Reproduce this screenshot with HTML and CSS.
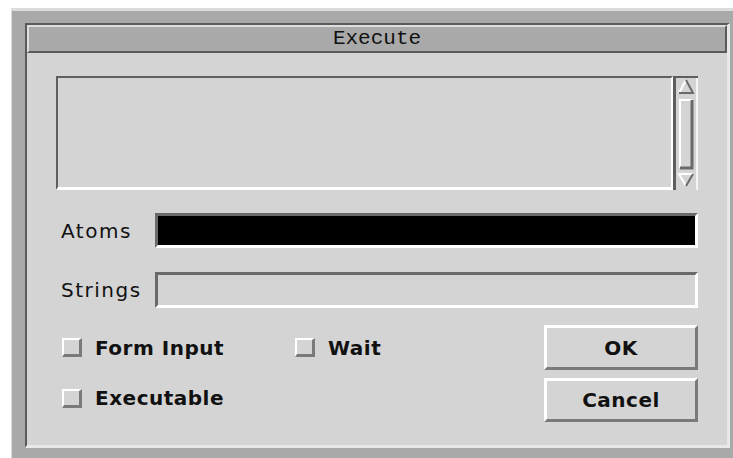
FILE: index.html
```html
<!DOCTYPE html>
<html>
<head>
<meta charset="utf-8">
<title>Execute</title>
<link rel="stylesheet" href="styles.css">
</head>
<body>
<div class="window">
  <div class="panel">
    <div class="titlebar">Execute</div>
    <div class="content">
      <div class="listrow">
        <div class="listbox"></div>
        <svg class="scrollbar" width="25" height="114" viewBox="0 0 25 114">
          <!-- sunken frame edges -->
          <rect x="0" y="0" width="25" height="2" fill="#5e5e5e"/>
          <rect x="0" y="0" width="3" height="114" fill="#5e5e5e"/>
          <rect x="23" y="2" width="2" height="112" fill="#f4f4f4"/>
          <!-- up arrow -->
          <polygon points="13,4 6,17 20,17" fill="#d4d4d4"/>
          <polyline points="6,17 13,4" fill="none" stroke="#fff" stroke-width="2"/>
          <polyline points="13,4 20,17 6,17" fill="none" stroke="#6a6a6a" stroke-width="2"/>
          <!-- thumb -->
          <rect x="6" y="23" width="14" height="70" fill="#d4d4d4"/>
          <polyline points="7,92 7,24 19,24" fill="none" stroke="#fff" stroke-width="2"/>
          <polyline points="19,24 19,92 7,92" fill="none" stroke="#6a6a6a" stroke-width="3"/>
          <!-- down arrow -->
          <polygon points="6,98 20,98 13,110" fill="#d4d4d4"/>
          <polyline points="13,110 6,98 20,98" fill="none" stroke="#fff" stroke-width="2"/>
          <polyline points="20,98 13,110" fill="none" stroke="#6a6a6a" stroke-width="2"/>
        </svg>
      </div>

      <div class="field field-atoms">
        <span class="label">Atoms</span>
        <div class="input input-dark"></div>
      </div>

      <div class="field field-strings">
        <span class="label">Strings</span>
        <div class="input input-strings"></div>
      </div>

      <div class="actions">
        <label class="check check-first"><span class="box"></span>Form Input</label>
        <label class="check"><span class="box"></span>Wait</label>
        <button class="btn">OK</button>
        <label class="check check-first check-exec"><span class="box"></span>Executable</label>
        <span></span>
        <button class="btn">Cancel</button>
      </div>
    </div>
  </div>
</div>
</body>
</html>
```

FILE: styles.css
```css
html, body {
  margin: 0;
  padding: 0;
  background: #ffffff;
  overflow: hidden;
}

body {
  width: 733px;
  height: 458px;
}

.window {
  box-sizing: border-box;
  margin: 8px 0 0 11px;
  width: 722px;
  height: 450px;
  border-top: 3px solid #dcdcdc;
  border-left: 1px solid #dcdcdc;
  background: #a9a9a9;
  padding: 12px 3px 10px 13px;
  display: flex;
}

.panel {
  flex: 1;
  display: flex;
  flex-direction: column;
  background: #d4d4d4;
  border-style: solid;
  border-width: 2px 3px 3px 2px;
  border-color: #5a5a5a #e8e8e8 #e8e8e8 #5a5a5a;
}

.titlebar {
  box-sizing: border-box;
  height: 28px;
  background: #a9a9a9;
  border-style: solid;
  border-width: 2px;
  border-color: #dedede #5a5a5a #5a5a5a #dedede;
  font-family: "Liberation Mono", "DejaVu Sans Mono", monospace;
  font-size: 21px;
  line-height: 24px;
  text-align: center;
  color: #111;
}

.content {
  flex: 1;
  padding: 23px 29px;
  display: flex;
  flex-direction: column;
}

.listrow {
  display: flex;
  height: 114px;
}

.listbox {
  flex: 1;
  box-sizing: border-box;
  border-style: solid;
  border-width: 2px 2px 3px 2px;
  border-color: #5e5e5e #ffffff #ffffff #5e5e5e;
  background: #d4d4d4;
}

.scrollbar {
  display: block;
  flex: none;
}

.field {
  display: flex;
  align-items: center;
}

.field-atoms {
  margin-top: 23px;
}

.field-strings {
  margin-top: 24px;
}

.label {
  box-sizing: border-box;
  width: 99px;
  padding-left: 5px;
  font-family: "DejaVu Sans", sans-serif;
  font-size: 20px;
  letter-spacing: 1.5px;
  color: #111;
}

.input {
  flex: 1;
  box-sizing: border-box;
  height: 35px;
  border-style: solid;
  border-width: 3px;
  border-color: #6a6a6a #ffffff #ffffff #6a6a6a;
  background: #d4d4d4;
}

.input-dark {
  background: #000000;
}

.input-strings {
  height: 36px;
}

.actions {
  margin-top: 17px;
  display: grid;
  grid-template-columns: 239px 249px 154px;
  grid-template-rows: 45px 44px;
  row-gap: 8px;
}

.check {
  display: flex;
  align-items: center;
  font-family: "DejaVu Sans", sans-serif;
  font-weight: bold;
  font-size: 20px;
  letter-spacing: 0.5px;
  color: #111;
}

.check-first {
  padding-left: 6px;
}

.check-exec {
  padding-bottom: 4px;
}

.box {
  box-sizing: border-box;
  width: 20px;
  height: 19px;
  margin-right: 13px;
  background: #d4d4d4;
  border-style: solid;
  border-width: 2px 3px 3px 2px;
  border-color: #ffffff #7a7a7a #7a7a7a #ffffff;
}

.btn {
  box-sizing: border-box;
  margin: 0;
  padding: 0;
  width: 154px;
  background: #d4d4d4;
  border-style: solid;
  border-width: 3px;
  border-color: #ffffff #7a7a7a #7a7a7a #ffffff;
  font-family: "DejaVu Sans", sans-serif;
  font-weight: bold;
  font-size: 20px;
  letter-spacing: 0.5px;
  color: #111;
}
```
